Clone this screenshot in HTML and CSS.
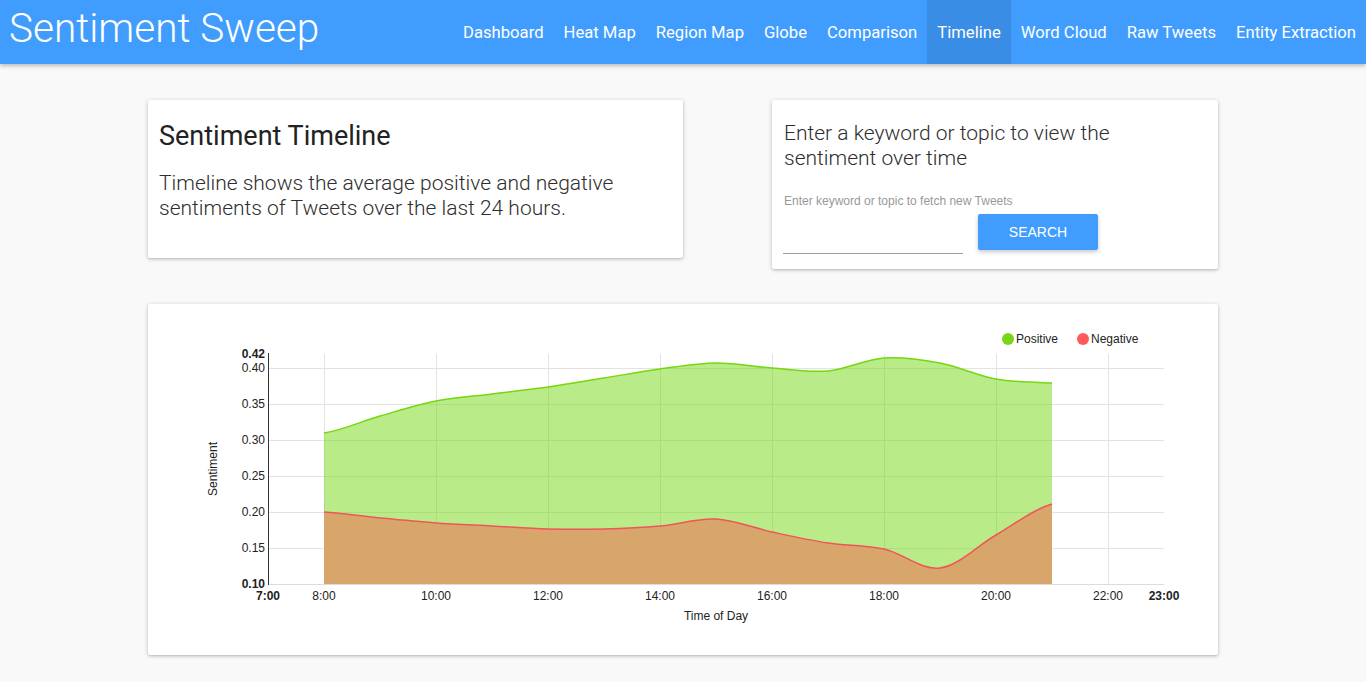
FILE: index.html
```html
<!DOCTYPE html>
<html lang="en">
<head>
<meta charset="utf-8">
<title>Sentiment Sweep - Timeline</title>
<link rel="stylesheet" href="styles.css">
</head>
<body>
<header class="navbar">
  <div class="brand">Sentiment Sweep</div>
  <nav class="nav">
    <a class="nav-item" href="#">Dashboard</a>
    <a class="nav-item" href="#">Heat Map</a>
    <a class="nav-item" href="#">Region Map</a>
    <a class="nav-item" href="#">Globe</a>
    <a class="nav-item" href="#">Comparison</a>
    <a class="nav-item active" href="#">Timeline</a>
    <a class="nav-item" href="#">Word Cloud</a>
    <a class="nav-item" href="#">Raw Tweets</a>
    <a class="nav-item" href="#">Entity Extraction</a>
  </nav>
</header>
<main class="container">
  <div class="top-row">
    <section class="card info-card">
      <h2 class="card-title">Sentiment Timeline</h2>
      <p class="card-text">Timeline shows the average positive and negative sentiments of Tweets over the last 24 hours.</p>
    </section>
    <section class="card search-card">
      <p class="card-text">Enter a keyword or topic to view the sentiment over time</p>
      <label class="field-label" for="kw">Enter keyword or topic to fetch new Tweets</label>
      <div class="search-row">
        <input id="kw" class="field-input" type="text">
        <button class="btn" type="button">SEARCH</button>
      </div>
    </section>
  </div>
  <section class="card chart-card">
    <svg class="chart" viewBox="148 304 1070 351" width="1070" height="351" xmlns="http://www.w3.org/2000/svg">
      <g class="grid">
        <line x1="268" y1="368" x2="1164" y2="368"/>
        <line x1="268" y1="404" x2="1164" y2="404"/>
        <line x1="268" y1="440" x2="1164" y2="440"/>
        <line x1="268" y1="476" x2="1164" y2="476"/>
        <line x1="268" y1="512" x2="1164" y2="512"/>
        <line x1="268" y1="548" x2="1164" y2="548"/>
        <line x1="324" y1="354" x2="324" y2="584"/>
        <line x1="436" y1="354" x2="436" y2="584"/>
        <line x1="548" y1="354" x2="548" y2="584"/>
        <line x1="660" y1="354" x2="660" y2="584"/>
        <line x1="772" y1="354" x2="772" y2="584"/>
        <line x1="884" y1="354" x2="884" y2="584"/>
        <line x1="996" y1="354" x2="996" y2="584"/>
        <line x1="1108" y1="354" x2="1108" y2="584"/>
      </g>
      <path class="pos-area" d="M324,433 C342.67,430.17 361.33,421.33 380,416 S417.33,404.67 436,401 S473.33,396.33 492,394 S529.33,389.67 548,387 S585.33,381 604,378 S641.33,371.5 660,369 S697.33,363.17 716,363 S753.33,366.67 772,368 S809.33,372.67 828,371 S865.33,359.33 884,358 S921.33,359.5 940,363 S977.33,375.67 996,379 S1033.33,382.33 1052,383 L1052,584 L324,584 Z"/>
      <path class="neg-area" d="M324,512 C342.67,513 361.33,516.17 380,518 S417.33,521.67 436,523 S473.33,525 492,526 S529.33,528.5 548,529 S585.33,529.5 604,529 S641.33,527.67 660,526 S697.33,518 716,519 S753.33,528 772,532 S809.33,540.17 828,543 S865.33,544.83 884,549 S921.33,570.33 940,568 S977.33,545.67 996,535 S1033.33,509.17 1052,504 L1052,584 L324,584 Z"/>
      <path class="pos-line" d="M324,433 C342.67,430.17 361.33,421.33 380,416 S417.33,404.67 436,401 S473.33,396.33 492,394 S529.33,389.67 548,387 S585.33,381 604,378 S641.33,371.5 660,369 S697.33,363.17 716,363 S753.33,366.67 772,368 S809.33,372.67 828,371 S865.33,359.33 884,358 S921.33,359.5 940,363 S977.33,375.67 996,379 S1033.33,382.33 1052,383"/>
      <path class="neg-line" d="M324,512 C342.67,513 361.33,516.17 380,518 S417.33,521.67 436,523 S473.33,525 492,526 S529.33,528.5 548,529 S585.33,529.5 604,529 S641.33,527.67 660,526 S697.33,518 716,519 S753.33,528 772,532 S809.33,540.17 828,543 S865.33,544.83 884,549 S921.33,570.33 940,568 S977.33,545.67 996,535 S1033.33,509.17 1052,504"/>
      <line class="axis-x" x1="268" y1="584.5" x2="1164" y2="584.5"/>
      <line class="axis-y" x1="268.5" y1="353" x2="268.5" y2="585"/>
      <g class="ylabels">
        <text x="265" y="357.5" class="bold">0.42</text>
        <text x="265" y="372">0.40</text>
        <text x="265" y="408">0.35</text>
        <text x="265" y="444">0.30</text>
        <text x="265" y="480">0.25</text>
        <text x="265" y="516">0.20</text>
        <text x="265" y="552">0.15</text>
        <text x="265" y="588" class="bold">0.10</text>
      </g>
      <g class="xlabels">
        <text x="268" y="600" class="bold">7:00</text>
        <text x="324" y="600">8:00</text>
        <text x="436" y="600">10:00</text>
        <text x="548" y="600">12:00</text>
        <text x="660" y="600">14:00</text>
        <text x="772" y="600">16:00</text>
        <text x="884" y="600">18:00</text>
        <text x="996" y="600">20:00</text>
        <text x="1108" y="600">22:00</text>
        <text x="1164" y="600" class="bold">23:00</text>
      </g>
      <text class="axis-title" x="716" y="620">Time of Day</text>
      <text class="axis-title" x="217" y="469" transform="rotate(-90 217 469)">Sentiment</text>
      <g class="legend">
        <circle cx="1008" cy="339" r="6" fill="#77d61a"/>
        <text x="1016" y="343">Positive</text>
        <circle cx="1083" cy="339" r="6" fill="#ff5a5c"/>
        <text x="1091" y="343">Negative</text>
      </g>
    </svg>
  </section>
</main>
</body>
</html>
```
FILE: styles.css
```css
* { box-sizing: border-box; }

html, body {
  margin: 0;
  padding: 0;
}

body {
  background: #f9f9f9;
  font-family: Roboto, "Noto Sans", "Liberation Sans", sans-serif;
  color: #333;
  height: 682px;
  overflow: hidden;
}

.navbar {
  display: flex;
  justify-content: space-between;
  align-items: flex-start;
  height: 64px;
  background: #409dfe;
  box-shadow: 0 2px 4px rgba(0, 0, 0, 0.25);
  position: relative;
  z-index: 2;
}

.brand {
  color: #fff;
  font-weight: 300;
  font-size: 40.5px;
  line-height: 57px;
  padding-left: 9px;
  white-space: nowrap;
}

.nav {
  display: flex;
  height: 64px;
}

.nav-item {
  display: block;
  height: 64px;
  padding: 1px 10px 0;
  line-height: 64px;
  font-size: 16.65px;
  color: #fff;
  text-decoration: none;
  white-space: nowrap;
  overflow: hidden;
}

.nav-item.active {
  background: #3a8de4;
}

.container {
  width: 1070px;
  margin: 36px auto 0;
}

.top-row {
  display: flex;
  justify-content: space-between;
  align-items: flex-start;
}

.card {
  background: #fff;
  border-radius: 2px;
  box-shadow: 0 1px 4px rgba(0, 0, 0, 0.22), 0 1px 2px rgba(0, 0, 0, 0.1);
}

.info-card {
  width: 535px;
  padding: 20px 11px 37px;
}

.card-title {
  margin: 0;
  font-size: 27px;
  font-weight: 400;
  line-height: 32px;
  color: #222;
}

.card-text {
  margin: 19px 0 0;
  font-size: 21px;
  font-weight: 300;
  line-height: 25px;
  color: #2e2e2e;
}

.search-card {
  width: 446px;
  padding: 21px 12px 15px;
}

.search-card .card-text {
  margin: 0;
}

.field-label {
  display: block;
  margin-top: 23px;
  font-family: "Liberation Sans", Arial, sans-serif;
  font-size: 12px;
  line-height: 14px;
  color: #999;
}

.search-row {
  display: flex;
  align-items: flex-end;
  gap: 15px;
  margin-top: 6px;
}

.field-input {
  width: 180px;
  height: 39px;
  border: none;
  border-bottom: 1px solid #9e9e9e;
  background: transparent;
  outline: none;
  padding: 0;
  margin-left: -1px;
  font-size: 16px;
}

.btn {
  width: 120px;
  height: 36px;
  margin-bottom: 4px;
  border: none;
  border-radius: 2px;
  background: #409dfe;
  color: #fff;
  font-family: "Liberation Sans", Arial, sans-serif;
  font-size: 14px;
  box-shadow: 0 2px 4px rgba(0, 0, 0, 0.22);
  padding: 0;
}

.chart-card {
  margin-top: 35px;
  height: 351px;
}

.chart {
  display: block;
  font-family: "Liberation Sans", Arial, sans-serif;
  font-size: 12px;
}

.grid line {
  stroke: #e3e3e3;
  stroke-width: 1;
  shape-rendering: crispEdges;
}

.pos-area {
  fill: rgba(118, 216, 20, 0.5);
}

.neg-area {
  fill: #d9a36a;
  fill-opacity: 0.97;
}

.pos-line {
  fill: none;
  stroke: #76d60f;
  stroke-width: 1.5;
}

.neg-line {
  fill: none;
  stroke: #f0555a;
  stroke-width: 1.5;
}

.axis-x {
  stroke: #dcdcdc;
  stroke-width: 1;
}

.axis-y {
  stroke: #333;
  stroke-width: 1;
}

.ylabels text {
  text-anchor: end;
  fill: #222;
}

.xlabels text {
  text-anchor: middle;
  fill: #222;
}

.bold {
  font-weight: 700;
  fill: #111;
}

.axis-title {
  text-anchor: middle;
  fill: #222;
}

.legend text {
  fill: #222;
}
```
